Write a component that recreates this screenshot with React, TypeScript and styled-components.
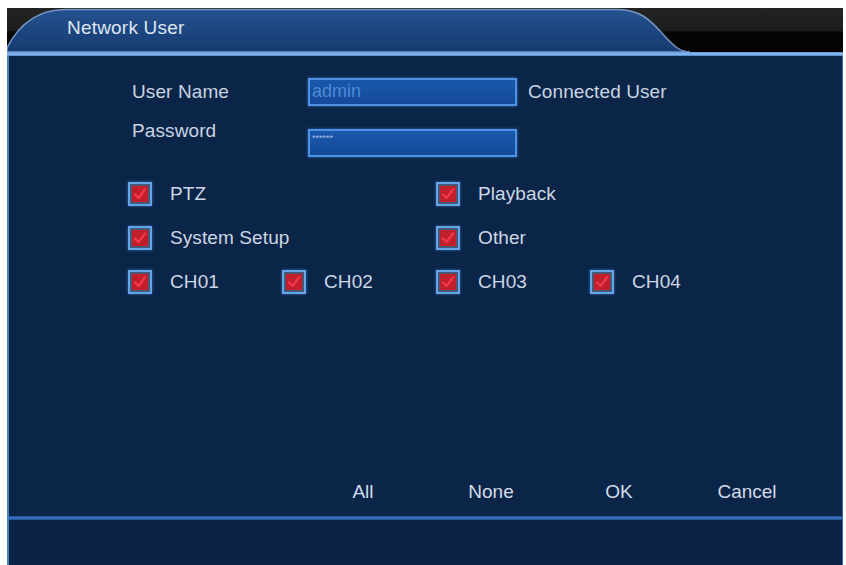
import React from "react";
import styled, { createGlobalStyle } from "styled-components";

const GlobalStyle = createGlobalStyle`
  html, body {
    margin: 0;
    padding: 0;
    background: #ffffff;
  }
  body {
    font-family: "Liberation Sans", Arial, sans-serif;
  }
`;

const Frame = styled.div`
  margin: 8px 3px 0 7px;
  width: 836px;
  height: 557px;
  display: flex;
  flex-direction: column;
  background: #0b2548;
  overflow: hidden;
`;

const Header = styled.div`
  position: relative;
  height: 44px;
  flex: none;
  display: flex;
  align-items: center;
  background: linear-gradient(
    to bottom,
    #242424 0,
    #1c1c1c 23px,
    #060606 24px,
    #020202 100%
  );
`;

const TabShape = styled.svg`
  position: absolute;
  left: 0;
  top: 0;
`;

const Title = styled.div`
  position: relative;
  margin: 0 0 4px 60px;
  color: #dfe6f0;
  font-size: 19px;
  letter-spacing: 0.2px;
`;

const TopRule = styled.div`
  height: 4px;
  flex: none;
  background: linear-gradient(to bottom, #5d93d8, #8fc0f4 50%, #4d82c8);
`;

const Body = styled.div`
  height: 460px;
  box-sizing: border-box;
  flex: none;
  display: flex;
  flex-direction: column;
  padding: 22px 0 8px 0;
  border-left: 2px solid #4a7fc4;
  border-right: 1px solid #3a6fb6;
  background: #0b2548;
`;

const FieldRow = styled.div<{ $gap?: number }>`
  display: grid;
  grid-template-columns: 176px 209px auto;
  grid-template-rows: 28px;
  align-items: center;
  padding-left: 123px;
  margin-top: ${(p) => p.$gap ?? 0}px;
`;

const Label = styled.div<{ $raised?: boolean }>`
  color: #c9d4e3;
  font-size: 19px;
  letter-spacing: 0.1px;
  white-space: nowrap;
  ${(p) => (p.$raised ? "align-self: start; margin-top: -9px;" : "")}
`;

const Note = styled(Label)`
  padding-left: 11px;
`;

const Field = styled.div<{ $small?: boolean }>`
  box-sizing: border-box;
  height: 28px;
  border: 2px solid #4e92e6;
  background: linear-gradient(to bottom, #1a58ad, #144a98);
  box-shadow: 0 0 3px rgba(80, 150, 240, 0.6);
  color: ${(p) => (p.$small ? "#a9c1e6" : "#4c8ad4")};
  font-size: ${(p) => (p.$small ? "9px" : "18px")};
  line-height: ${(p) => (p.$small ? "14px" : "23px")};
  padding-left: 2px;
  display: flex;
  align-items: flex-start;
`;

const Checks = styled.div`
  display: grid;
  grid-template-columns: repeat(4, 154px);
  grid-auto-rows: 44px;
  margin-top: 15px;
  padding-left: 119px;
`;

const CheckItem = styled.div<{ $span?: number }>`
  display: flex;
  align-items: center;
  gap: 18px;
  grid-column: span ${(p) => p.$span ?? 1};
`;

const Box = styled.span`
  box-sizing: border-box;
  width: 24px;
  height: 24px;
  flex: none;
  border: 2px solid #64a6ec;
  background: #c01f2b;
  box-shadow: inset 0 0 0 2px #4a5878, 0 0 3px rgba(100, 170, 240, 0.5);
  display: flex;
  align-items: center;
  justify-content: center;
`;

const CheckText = styled.span`
  color: #cdd7e6;
  font-size: 19px;
  letter-spacing: 0.1px;
  white-space: nowrap;
`;

const Actions = styled.div`
  margin-top: auto;
  height: 32px;
  display: flex;
  align-items: center;
  padding-left: 290px;
`;

const Action = styled.div`
  width: 128px;
  text-align: center;
  color: #d2dbe9;
  font-size: 19px;
`;

const BottomRule = styled.div`
  height: 4px;
  flex: none;
  background: linear-gradient(to bottom, #1f4f90, #3a78c4 50%, #1f4f90);
  border-left: 2px solid #4a7fc4;
`;

const Footer = styled.div`
  flex: 1;
  border-left: 2px solid #4a7fc4;
  border-right: 1px solid #3a6fb6;
  background: #0a2347;
`;

function Check({ label, span }: { label: string; span?: number }) {
  return (
    <CheckItem $span={span}>
      <Box>
        <svg width="16" height="16" viewBox="0 0 16 16">
          <path
            d="M3 8.5 L6.5 12 L13 3.5"
            fill="none"
            stroke="#f0384a"
            strokeWidth="2.4"
            strokeLinecap="round"
            strokeLinejoin="round"
          />
        </svg>
      </Box>
      <CheckText>{label}</CheckText>
    </CheckItem>
  );
}

export default function App() {
  return (
    <>
      <GlobalStyle />
      <Frame>
        <Header>
          <TabShape width="836" height="44" viewBox="0 0 836 44">
            <defs>
              <linearGradient id="tabFill" x1="0" y1="0" x2="0" y2="1">
                <stop offset="0" stopColor="#24528f" />
                <stop offset="1" stopColor="#163a71" />
              </linearGradient>
            </defs>
            <path
              d="M0 40 C 10 20, 28 2, 58 1.5 L 610 1.5 C 633 1.5, 643 12, 654 24 C 666 38, 673 44, 683 44 L 0 44 Z"
              fill="url(#tabFill)"
              stroke="#7596c4"
              strokeWidth="1.5"
            />
          </TabShape>
          <Title>Network User</Title>
        </Header>
        <TopRule />
        <Body>
          <FieldRow>
            <Label>User Name</Label>
            <Field>admin</Field>
            <Note>Connected User</Note>
          </FieldRow>
          <FieldRow $gap={23}>
            <Label $raised>Password</Label>
            <Field $small>******</Field>
          </FieldRow>
          <Checks>
            <Check label="PTZ" span={2} />
            <Check label="Playback" span={2} />
            <Check label="System Setup" span={2} />
            <Check label="Other" span={2} />
            <Check label="CH01" />
            <Check label="CH02" />
            <Check label="CH03" />
            <Check label="CH04" />
          </Checks>
          <Actions>
            <Action>All</Action>
            <Action>None</Action>
            <Action>OK</Action>
            <Action>Cancel</Action>
          </Actions>
        </Body>
        <BottomRule />
        <Footer />
      </Frame>
    </>
  );
}
